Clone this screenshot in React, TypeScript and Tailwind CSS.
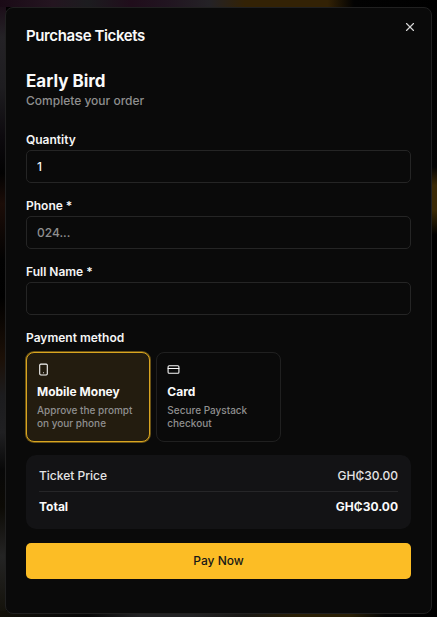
import { useState } from 'react';
import { CreditCard, Smartphone, X } from 'lucide-react';

const methods = [
  {
    id: 'momo',
    icon: Smartphone,
    title: 'Mobile Money',
    desc: 'Approve the prompt on your phone',
  },
  {
    id: 'card',
    icon: CreditCard,
    title: 'Card',
    desc: 'Secure Paystack checkout',
  },
];

const TICKET_PRICE = 30;

const formatPrice = (value: number) => `GH₵${value.toFixed(2)}`;

const labelClass = 'block text-[12px] leading-4 font-semibold text-neutral-100';
const inputClass =
  'mt-0.5 block h-[33px] w-full rounded-[5px] border border-[#252525] bg-transparent px-2.5 text-[12px] font-medium text-neutral-100 placeholder:text-[#8f8f8f] outline-none focus:border-[#fbbf24]';

export default function App() {
  const [quantity, setQuantity] = useState('1');
  const [phone, setPhone] = useState('');
  const [name, setName] = useState('');
  const [method, setMethod] = useState('momo');

  const total = TICKET_PRICE * (Number(quantity) || 1);

  return (
    <div className="min-h-screen bg-black bg-[linear-gradient(90deg,#1a0a16,#241520_12%,#1c1c1f_20%,#200d1b_30%,#211420_38%,#242226_48%,#332205_56%,#332205_75%,#020202_81%,#000),linear-gradient(90deg,#121008,#0c0b09_12%,#070707_20%,#222224_32%,#222224_44%,#191714_56%,#2a1f05_68%,#2a1f05_80%,#050505_88%,#000),linear-gradient(180deg,#1a0a16,#242226_6%,#1e1d20_14%,#0d0a0e_22%,#020202_28%,#1c0d08_33%,#020202_42%,#000_48%,#1c1007_58%,#1c1c1e_64%,#202022_70%,#080808_76%,#0c0a05_82%,#242424_90%,#121008),linear-gradient(180deg,#000,#050505_27%,#3a2905_30%,#3a2905_34%,#000_38%)] bg-[size:100%_7px,100%_7px,6px_100%,6px_100%] bg-[position:0_0,0_100%,0_0,100%_0] bg-no-repeat px-[5px] pt-[7px] pb-1 font-['Inter',sans-serif]">
      <div
        role="dialog"
        aria-labelledby="dialog-title"
        className="relative rounded-lg border border-[#202020] bg-[#0a0a0a] px-5 pt-[18px] pb-[34px] text-neutral-50"
      >
        <button
          type="button"
          aria-label="Close"
          className="absolute top-3 right-3.5 text-neutral-300 hover:text-white"
        >
          <X size={14} />
        </button>

        <h2 id="dialog-title" className="text-[15px] leading-5 font-semibold tracking-tight">
          Purchase Tickets
        </h2>

        <form onSubmit={(e) => e.preventDefault()}>
          <div className="mt-[23px]">
            <h3 className="text-[17px] leading-6 font-bold">Early Bird</h3>
            <p className="text-[12px] leading-4 font-medium text-[#8f8f8f]">Complete your order</p>
          </div>

          <div className="mt-[23px] flex flex-col gap-[15px]">
            <div>
              <label htmlFor="quantity" className={labelClass}>Quantity</label>
              <input
                id="quantity"
                type="number"
                min={1}
                value={quantity}
                onChange={(e) => setQuantity(e.target.value)}
                className={inputClass}
              />
            </div>
            <div>
              <label htmlFor="phone" className={labelClass}>Phone *</label>
              <input
                id="phone"
                type="tel"
                placeholder="024..."
                value={phone}
                onChange={(e) => setPhone(e.target.value)}
                className={inputClass}
              />
            </div>
            <div>
              <label htmlFor="name" className={labelClass}>Full Name *</label>
              <input
                id="name"
                type="text"
                value={name}
                onChange={(e) => setName(e.target.value)}
                className={inputClass}
              />
            </div>

            <div role="group" aria-labelledby="method-label">
              <p id="method-label" className={labelClass}>Payment method</p>
              <div className="mt-1.5 grid grid-cols-3 gap-1.5">
                {methods.map(({ id, icon: Icon, title, desc }) => (
                  <button
                    key={id}
                    type="button"
                    aria-pressed={method === id}
                    onClick={() => setMethod(id)}
                    className={`flex flex-col items-start rounded-lg border px-2.5 pt-2.5 pb-[11px] text-left ${
                      method === id
                        ? 'border-[#d9a520] bg-[#231c0f] ring-1 ring-[#fbbf24]/40'
                        : 'border-[#202020] bg-transparent'
                    }`}
                  >
                    <Icon size={13} />
                    <span className="mt-2 text-[12px] leading-4 font-bold">{title}</span>
                    <span className="mt-1 text-[10px] leading-[13px] font-medium text-[#8f8f8f]">{desc}</span>
                  </button>
                ))}
              </div>
            </div>
          </div>

          <div className="mt-[13px] rounded-[10px] bg-[#131315] px-[13px] py-3 text-[12px] leading-[18px]">
            <div className="flex justify-between pb-1.5 font-medium text-neutral-200">
              <span>Ticket Price</span>
              <span>{formatPrice(TICKET_PRICE)}</span>
            </div>
            <div className="flex justify-between border-t border-[#262628] pt-1.5 pb-px font-bold">
              <span>Total</span>
              <span>{formatPrice(total)}</span>
            </div>
          </div>

          <button
            type="submit"
            className="mt-3.5 h-9 w-full rounded-[5px] bg-[#fcbd25] text-[12px] font-medium text-neutral-900 hover:bg-[#fbbf24]"
          >
            Pay Now
          </button>
        </form>
      </div>
    </div>
  );
}
